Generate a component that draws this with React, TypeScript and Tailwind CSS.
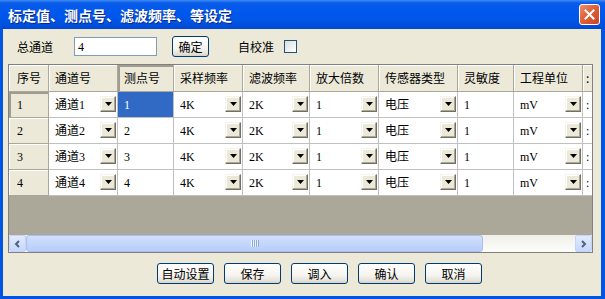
import React from "react";

type Col = { label: string; w: string; dd?: boolean };

const cols: Col[] = [
  { label: "序号", w: "w-[40px]" },
  { label: "通道号", w: "w-[69px]", dd: true },
  { label: "测点号", w: "w-[56px]" },
  { label: "采样频率", w: "w-[69px]", dd: true },
  { label: "滤波频率", w: "w-[67px]", dd: true },
  { label: "放大倍数", w: "w-[69px]", dd: true },
  { label: "传感器类型", w: "w-[79px]", dd: true },
  { label: "灵敏度", w: "w-[56px]" },
  { label: "工程单位", w: "w-[69px]", dd: true },
  { label: ":", w: "w-[20px]" },
];

const rows = [
  ["1", "通道1", "1", "4K", "2K", "1", "电压", "1", "mV", ":"],
  ["2", "通道2", "2", "4K", "2K", "1", "电压", "1", "mV", ":"],
  ["3", "通道3", "3", "4K", "2K", "1", "电压", "1", "mV", ":"],
  ["4", "通道4", "4", "4K", "2K", "1", "电压", "1", "mV", ":"],
];

function DropBtn() {
  return (
    <div className="absolute right-[1px] top-[4px] w-[16px] h-[16px] bg-[#ece9d8] border border-t-[#f4f3ee] border-l-[#f4f3ee] border-r-[#716f64] border-b-[#716f64] shadow-[inset_-1px_-1px_0_#aca899,inset_1px_1px_0_#ffffff] flex items-center justify-center">
      <svg width="7" height="4" viewBox="0 0 7 4">
        <polygon points="0,0 7,0 3.5,4" fill="#000" />
      </svg>
    </div>
  );
}

function XpButton({ label, w }: { label: string; w: string }) {
  return (
    <div
      className={`${w} h-[21px] shrink-0 rounded-[3px] border border-[#003c74] bg-[linear-gradient(to_bottom,#ffffff_0%,#f5f4ef_60%,#e3e0d6_90%,#d6d0c5_100%)] flex items-center justify-center text-[12px] text-black`}
    >
      {label}
    </div>
  );
}

function ScrollArrow({ dir }: { dir: "left" | "right" }) {
  return (
    <div className="w-[17px] h-[17px] shrink-0 rounded-[2px] border border-[#c3d3fd] bg-[linear-gradient(to_bottom,#e2ebfe,#c6d7fb)] flex items-center justify-center">
      <svg width="7" height="8" viewBox="0 0 7 8">
        {dir === "left" ? (
          <polyline points="5,1 2,4 5,7" fill="none" stroke="#4d6185" strokeWidth="2" />
        ) : (
          <polyline points="2,1 5,4 2,7" fill="none" stroke="#4d6185" strokeWidth="2" />
        )}
      </svg>
    </div>
  );
}

export default function App() {
  return (
    <div className="w-[605px] h-[299px] flex flex-col bg-[#0055e5] overflow-hidden [font-family:'Noto_Sans_CJK_SC',sans-serif]">
      {/* Title bar */}
      <div className="h-[29px] shrink-0 flex items-center justify-between pl-[8px] pr-[5px] bg-[linear-gradient(to_bottom,#3d8cf5_0%,#0a5ce8_10%,#0058ee_40%,#0054e3_75%,#0048d4_100%)]">
        <span className="text-white font-bold text-[14px] leading-none [text-shadow:1px_1px_0_#0a2a8a]">
          标定值、测点号、滤波频率、等设定
        </span>
        <div className="w-[21px] h-[21px] rounded-[3px] border border-white bg-[linear-gradient(135deg,#f0906a_0%,#e2643d_40%,#c94420_100%)] flex items-center justify-center">
          <svg width="11" height="11" viewBox="0 0 11 11">
            <path d="M1.5 1.5 L9.5 9.5 M9.5 1.5 L1.5 9.5" stroke="#fff" strokeWidth="2" strokeLinecap="square" />
          </svg>
        </div>
      </div>

      {/* Body */}
      <div className="flex-1 ml-[3px] mr-[4px] mb-[3px] bg-[#ece9d8] flex flex-col">
        {/* Top row */}
        <div className="mt-[7px] h-[21px] flex items-center text-[12px] text-black">
          <span className="ml-[14px]">总通道</span>
          <div className="ml-[21px] w-[83px] h-[19px] border border-[#7f9db9] bg-white flex items-center pl-[3px] [font-family:'Liberation_Serif',serif] text-[12px]">
            4
          </div>
          <div className="ml-[15px]">
            <XpButton label="确定" w="w-[37px]" />
          </div>
          <span className="ml-[29px]">自校准</span>
          <div className="ml-[10px] w-[13px] h-[13px] border border-[#1c5180] bg-[linear-gradient(135deg,#dcdcd7,#ffffff)]" />
        </div>

        {/* Grid */}
        <div className="mt-[7px] ml-[5px] w-[585px] h-[189px] border border-[#808080] flex flex-col overflow-hidden bg-[#aca899]">
          <div className="h-[27px] flex shrink-0">
            {cols.map((c, i) => (
              <div
                key={i}
                className={`${c.w} shrink-0 h-full bg-[#ece9d8] border-r border-b border-[#aca899] flex items-center ${i === 0 ? "pl-[8px]" : i === 9 ? "pl-[3px]" : "pl-[6px]"} text-[12px] text-black ${i === 2 ? "shadow-[inset_2px_2px_0_#a09d90]" : "shadow-[inset_1px_1px_0_#ffffff]"}`}
              >
                <span className="whitespace-nowrap">{c.label}</span>
              </div>
            ))}
          </div>
          {rows.map((r, ri) => (
            <div key={ri} className="h-[26px] flex shrink-0">
              {r.map((v, ci) => {
                const c = cols[ci];
                if (ci === 0) {
                  return (
                    <div
                      key={ci}
                      className={`${c.w} shrink-0 h-full bg-[#ece9d8] border-r border-b border-[#aca899] flex items-center pl-[8px] text-[12px] [font-family:'Liberation_Serif',serif] ${ri === 0 ? "shadow-[inset_2px_2px_0_#a09d90]" : "shadow-[inset_1px_1px_0_#ffffff]"}`}
                    >
                      {v}
                    </div>
                  );
                }
                const sel = ri === 0 && ci === 2;
                return (
                  <div
                    key={ci}
                    className={`${c.w} relative shrink-0 h-full border-r border-b border-[#c0c0c0] flex items-center ${ci === 9 ? "pl-[3px]" : "pl-[6px]"} text-[12px] [font-family:'Liberation_Serif','Noto_Sans_CJK_SC',serif] whitespace-nowrap ${sel ? "bg-[#316ac5] text-white" : "bg-white text-black"}`}
                  >
                    {v}
                    {c.dd && <DropBtn />}
                  </div>
                );
              })}
            </div>
          ))}
          <div className="flex-1 bg-[#aca899]" />
          {/* Scrollbar */}
          <div className="h-[17px] shrink-0 flex bg-[linear-gradient(to_bottom,#f0efe9,#fdfdfa)]">
            <ScrollArrow dir="left" />
            <div className="w-[457px] h-[17px] shrink-0 rounded-[3px] border border-[#a9bff0] bg-[linear-gradient(to_bottom,#d3e0fd,#c4d6fc_50%,#b8cdf9)] flex items-center justify-center">
              <svg width="8" height="7" viewBox="0 0 8 7">
                <rect x="0" y="0" width="1" height="7" fill="#eef4fe" />
                <rect x="1" y="0" width="1" height="7" fill="#8ca7e3" />
                <rect x="2" y="0" width="1" height="7" fill="#eef4fe" />
                <rect x="3" y="0" width="1" height="7" fill="#8ca7e3" />
                <rect x="4" y="0" width="1" height="7" fill="#eef4fe" />
                <rect x="5" y="0" width="1" height="7" fill="#8ca7e3" />
                <rect x="6" y="0" width="1" height="7" fill="#eef4fe" />
                <rect x="7" y="0" width="1" height="7" fill="#8ca7e3" />
              </svg>
            </div>
            <div className="flex-1" />
            <ScrollArrow dir="right" />
          </div>
        </div>

        {/* Buttons */}
        <div className="mt-[10px] h-[21px] flex gap-[10px] pl-[154px]">
          <XpButton label="自动设置" w="w-[57px]" />
          <XpButton label="保存" w="w-[57px]" />
          <XpButton label="调入" w="w-[57px]" />
          <XpButton label="确认" w="w-[57px]" />
          <XpButton label="取消" w="w-[57px]" />
        </div>
      </div>
    </div>
  );
}
